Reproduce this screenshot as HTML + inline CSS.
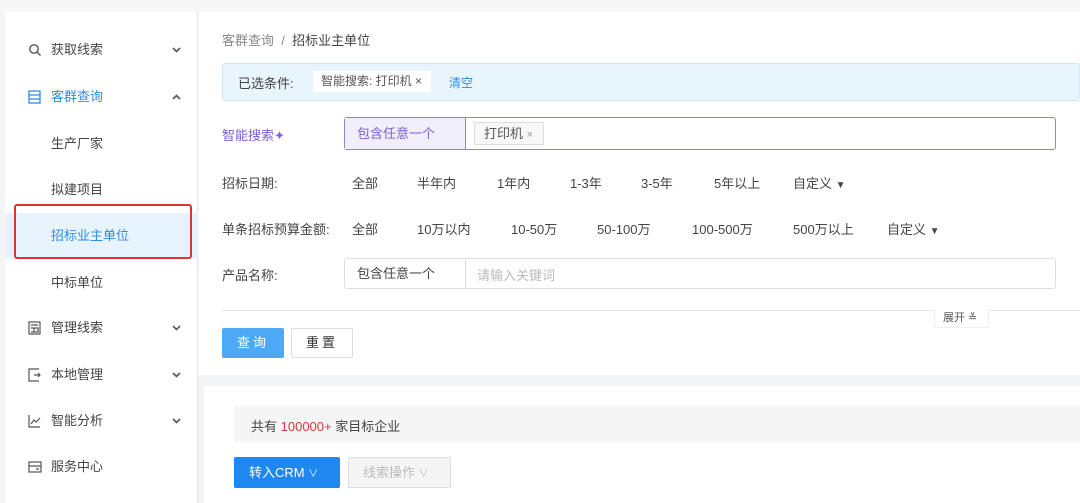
<!DOCTYPE html>
<html><head><meta charset="utf-8"><style>
*{margin:0;padding:0;box-sizing:border-box}
body{width:1080px;height:503px;overflow:hidden;background:#f3f4f6;font-family:"Liberation Sans","Noto Sans CJK SC",sans-serif;font-size:13px;color:#333;position:relative}
.abs{position:absolute}
.side{left:5px;top:12px;width:193px;height:491px;background:#fff;border-right:1px solid #e8e8e8}
.mi{position:absolute;left:0;width:193px;height:46px;line-height:46px;color:#444;font-size:13px}
.mi svg.ic{position:absolute;left:23px;top:16px}
.mi .t{position:absolute;left:46px}
.mi svg.ar{position:absolute;left:167px;top:20px}
.main{left:199px;top:12px;width:881px;height:363px;background:#fff}
.t2{color:#444;font-size:13px;position:absolute}
.opt{position:absolute;color:#444;font-size:13px}
</style></head><body>
<div class="abs" style="left:0;top:0;width:1080px;height:12px;background:#f7f7f8"></div>
<div class="abs side">
 <div class="mi" style="top:15px"><svg class="ic" width="14" height="14" viewBox="0 0 14 14" fill="none" stroke="#555" stroke-width="1.4"><circle cx="6" cy="6" r="4.2"/><path d="M9 9l3.5 3.5"/></svg><span class="t">获取线索</span><svg class="ar" width="9" height="6" viewBox="0 0 9 6" fill="none" stroke="#555" stroke-width="1.6"><path d="M1 1l3.5 3.5L8 1"/></svg></div>
 <div class="mi" style="top:62px;color:#2f8de4"><svg class="ic" width="13" height="14" viewBox="0 0 13 14" fill="none" stroke="#2f8de4" stroke-width="1.3"><rect x="1" y="1" width="11" height="12"/><path d="M1 5h11M1 9h11"/></svg><span class="t">客群查询</span><svg class="ar" width="9" height="6" viewBox="0 0 9 6" fill="none" stroke="#555" stroke-width="1.6"><path d="M1 5l3.5-3.5L8 5"/></svg></div>
 <div class="mi" style="top:109px"><span class="t">生产厂家</span></div>
 <div class="mi" style="top:155px"><span class="t">拟建项目</span></div>
 <div class="mi" style="top:201px;background:#e7f4fd;color:#2f8de4;height:46px"><span class="t">招标业主单位</span></div>
 <div class="abs" style="left:9px;top:192px;width:178px;height:55px;border:2px solid #e0332f;border-radius:3px"></div>
 <div class="mi" style="top:248px"><span class="t">中标单位</span></div>
 <div class="mi" style="top:293px"><svg class="ic" width="13" height="14" viewBox="0 0 13 14" fill="none" stroke="#555" stroke-width="1.2"><rect x="1" y="1" width="11" height="12"/><path d="M3 4h7M3 7h3v4M6 7h4v4H3"/></svg><span class="t">管理线索</span><svg class="ar" width="9" height="6" viewBox="0 0 9 6" fill="none" stroke="#555" stroke-width="1.6"><path d="M1 1l3.5 3.5L8 1"/></svg></div>
 <div class="mi" style="top:340px"><svg class="ic" width="13" height="14" viewBox="0 0 13 14" fill="none" stroke="#555" stroke-width="1.2"><path d="M11 1H1v12h10M6 7h6M10 5l2 2-2 2"/></svg><span class="t">本地管理</span><svg class="ar" width="9" height="6" viewBox="0 0 9 6" fill="none" stroke="#555" stroke-width="1.6"><path d="M1 1l3.5 3.5L8 1"/></svg></div>
 <div class="mi" style="top:386px"><svg class="ic" width="13" height="14" viewBox="0 0 13 14" fill="none" stroke="#555" stroke-width="1.2"><path d="M1 1v12h11M3 10l3-4 2 2 4-4"/></svg><span class="t">智能分析</span><svg class="ar" width="9" height="6" viewBox="0 0 9 6" fill="none" stroke="#555" stroke-width="1.6"><path d="M1 1l3.5 3.5L8 1"/></svg></div>
 <div class="mi" style="top:432px"><svg class="ic" width="14" height="14" viewBox="0 0 14 14" fill="none" stroke="#555" stroke-width="1.2"><rect x="1" y="2" width="12" height="10"/><path d="M1 6h12M8 9h3"/></svg><span class="t">服务中心</span></div>
</div>
<div class="abs main"></div>
<div class="t2" style="left:222px;top:30px;color:#888">客群查询 &nbsp;/&nbsp; <span style="color:#444">招标业主单位</span></div>
<div class="abs" style="left:222px;top:63px;width:858px;height:38px;background:#e9f5fc;border:1px solid #cfe7f6;border-radius:3px"></div>
<div class="t2" style="left:238px;top:73px">已选条件:</div>
<div class="abs" style="left:313px;top:71px;width:118px;height:21px;background:#fff;font-size:12px;line-height:21px;padding-left:8px;color:#555">智能搜索: 打印机 ×</div>
<div class="t2" style="left:449px;top:74px;color:#2f8de4;font-size:12px">清空</div>
<div class="t2" style="left:222px;top:125px;color:#7b5fd3">智能搜索<span style="color:#8b5cf6">✦</span></div>
<div class="abs" style="left:344px;top:117px;width:712px;height:33px;border:1px solid #8e83d9;border-radius:3px;background:#fff"></div>
<div class="abs" style="left:345px;top:118px;width:121px;height:31px;background:#f1eefc;border-right:1px solid #8e83d9;color:#7b5fd3;line-height:31px;padding-left:12px">包含任意一个</div>
<div class="abs" style="left:474px;top:122px;width:70px;height:23px;border:1px solid #ddd;background:#f7f7f7;line-height:21px;padding-left:9px;color:#555">打印机 <span style="font-size:11px;color:#999">×</span></div>
<div class="t2" style="left:222px;top:173px">招标日期:</div>
<div class="opt" style="left:352px;top:173px">全部</div><div class="opt" style="left:417px;top:173px">半年内</div><div class="opt" style="left:497px;top:173px">1年内</div><div class="opt" style="left:570px;top:173px">1-3年</div><div class="opt" style="left:641px;top:173px">3-5年</div><div class="opt" style="left:714px;top:173px">5年以上</div><div class="opt" style="left:793px;top:173px">自定义 <span style="font-size:10px">▼</span></div>
<div class="t2" style="left:222px;top:219px">单条招标预算金额:</div>
<div class="opt" style="left:352px;top:219px">全部</div><div class="opt" style="left:417px;top:219px">10万以内</div><div class="opt" style="left:511px;top:219px">10-50万</div><div class="opt" style="left:597px;top:219px">50-100万</div><div class="opt" style="left:692px;top:219px">100-500万</div><div class="opt" style="left:793px;top:219px">500万以上</div><div class="opt" style="left:887px;top:219px">自定义 <span style="font-size:10px">▼</span></div>
<div class="t2" style="left:222px;top:265px">产品名称:</div>
<div class="abs" style="left:344px;top:258px;width:712px;height:31px;border:1px solid #ddd;border-radius:3px"></div>
<div class="abs" style="left:345px;top:259px;width:121px;height:29px;border-right:1px solid #ddd;line-height:29px;padding-left:12px;color:#444">包含任意一个</div>
<div class="t2" style="left:477px;top:265px;color:#bbb">请输入关键词</div>
<div class="abs" style="left:222px;top:310px;width:858px;height:1px;background:#e8e8e8"></div>
<div class="abs" style="left:934px;top:310px;width:55px;height:18px;background:#fff;border:1px solid #eee;border-top:none;font-size:11px;color:#555;padding-left:8px;line-height:16px">展开 ≚</div>
<div class="abs" style="left:222px;top:328px;width:62px;height:30px;background:#4da9f5;border-radius:2px;color:#fff;text-align:center;line-height:30px;letter-spacing:3px">查询</div>
<div class="abs" style="left:291px;top:328px;width:62px;height:30px;border:1px solid #ddd;border-radius:2px;text-align:center;line-height:28px;letter-spacing:3px">重置</div>
<div class="abs" style="left:204px;top:386px;width:876px;height:117px;background:#fff"></div>
<div class="abs" style="left:234px;top:406px;width:846px;height:36px;background:#f5f5f5"></div>
<div class="t2" style="left:251px;top:416px">共有 <span style="color:#d9363e">100000+</span> 家目标企业</div>
<div class="abs" style="left:234px;top:457px;width:106px;height:31px;background:#1e88f0;border-radius:2px;color:#fff;line-height:31px;padding-left:15px">转入CRM <span style="font-size:10px">∨</span></div>
<div class="abs" style="left:348px;top:457px;width:103px;height:31px;background:#f5f5f5;border:1px solid #ddd;border-radius:2px;color:#bbb;line-height:29px;padding-left:14px">线索操作 <span style="font-size:10px">∨</span></div>
</body></html>
